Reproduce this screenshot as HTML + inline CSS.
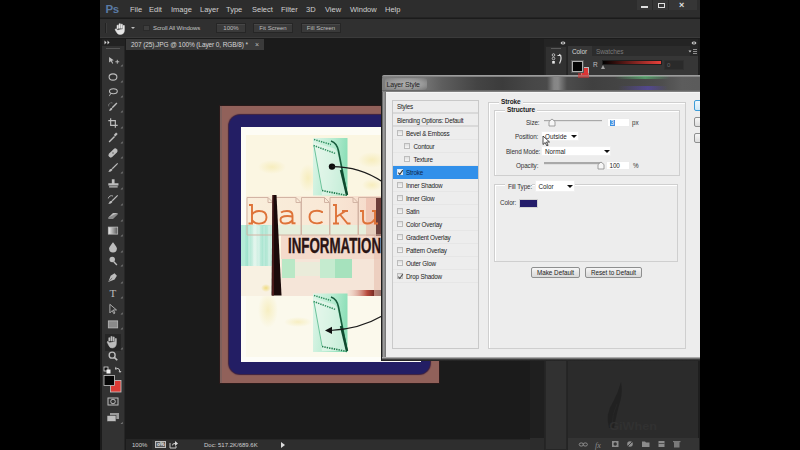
<!DOCTYPE html>
<html><head><meta charset="utf-8">
<style>
*{margin:0;padding:0;box-sizing:border-box}
html,body{width:800px;height:450px;overflow:hidden;background:#000}
body{position:relative;font-family:"Liberation Sans",sans-serif;}
.a{position:absolute}
.t{position:absolute;white-space:nowrap;line-height:1}
#ps{position:absolute;left:0;top:0;width:700px;height:450px;overflow:hidden}
.mn{position:absolute;top:6px;font-size:7.5px;color:#d0d0d0;white-space:nowrap;line-height:1}
.btn{position:absolute;top:23px;height:10px;background:#3a3a3a;border:1px solid #262626;box-shadow:inset 0 1px 0 #474747;font-size:6px;color:#bdbdbd;text-align:center;line-height:8px}
.row{position:absolute;left:393px;width:85px;height:13px;border-bottom:1px solid #e4e4e4;font-size:6.3px;color:#222;line-height:12px;white-space:nowrap;letter-spacing:-0.2px}
.cb{position:absolute;top:3px;width:6px;height:6px;border:1px solid #bcbcbc;background:linear-gradient(#dedede,#f6f6f6)}
.lbl{position:absolute;font-size:6.3px;color:#333;white-space:nowrap;line-height:1;letter-spacing:-0.1px}
.dd{position:absolute;background:#fff;border:1px solid #f0f0f0;font-size:6.3px;color:#222;line-height:9px;padding-left:3px;white-space:nowrap}
.arr{position:absolute;width:0;height:0;border-left:3px solid transparent;border-right:3px solid transparent;border-top:3px solid #111}
.dbtn{position:absolute;height:11px;border:1px solid #8e8f8f;border-radius:2px;background:linear-gradient(#f6f6f6 0%,#e6e6e6 50%,#d9d9d9 100%);font-size:6.3px;color:#222;text-align:center;line-height:9px;white-space:nowrap}
.lt{position:absolute;top:75px;font-family:"Liberation Mono",monospace;font-size:29px;color:#e2793c;line-height:1;transform:scaleX(1.2)}
</style></head><body>
<div id="ps">
  <div class="a" style="left:100px;top:0;width:600px;height:450px;background:#1b1b1b"></div>
  <!-- menu bar -->
  <div class="a" style="left:100px;top:0;width:600px;height:18px;background:#2d2d2d;border-bottom:1px solid #232323"></div>
  <div class="t" style="left:105.5px;top:3.5px;font-size:11.5px;font-weight:bold;color:#5a7aa5;letter-spacing:-0.4px">Ps</div>
  <span class="mn" style="left:130px">File</span>
  <span class="mn" style="left:149px">Edit</span>
  <span class="mn" style="left:171px">Image</span>
  <span class="mn" style="left:200px">Layer</span>
  <span class="mn" style="left:226px">Type</span>
  <span class="mn" style="left:252px">Select</span>
  <span class="mn" style="left:281px">Filter</span>
  <span class="mn" style="left:306px">3D</span>
  <span class="mn" style="left:325px">View</span>
  <span class="mn" style="left:350px">Window</span>
  <span class="mn" style="left:385px">Help</span>
  <!-- window controls -->
  <div class="a" style="left:637px;top:0;width:16px;height:10px;background:#363636;border-right:1px solid #2a2a2a"></div>
  <div class="a" style="left:653px;top:0;width:16px;height:10px;background:#363636;border-right:1px solid #2a2a2a"></div>
  <div class="a" style="left:669px;top:0;width:28px;height:10px;background:#363636"></div>
  <div class="a" style="left:641px;top:6px;width:7px;height:2px;background:#e0e0e0"></div>
  <div class="a" style="left:658px;top:3px;width:7px;height:5px;border:1.5px solid #e0e0e0"></div>
  <div class="t" style="left:679px;top:1px;font-size:9px;font-weight:bold;color:#e0e0e0">×</div>
  <!-- options bar -->
  <div class="a" style="left:100px;top:19px;width:600px;height:19px;background:#303030;border-bottom:1px solid #3a3a3a"></div>
  <div class="a" style="left:105px;top:23px;width:2px;height:10px;background:#222;border-right:1px solid #3c3c3c"></div>
  <svg class="a" style="left:114px;top:22px" width="13" height="13" viewBox="0 0 13 13"><path d="M3 7V3.2h1.4V6.5M5 6.5V1.8h1.4v4.7M7 6.5V2.2h1.4v4.3M9 7V3.5h1.4v4.5q0 4.5-4.5 4.5q-2.3 0-3.3-2.2L1 7.5l1-0.8 1.8 1.5z" fill="#e6e6e6" stroke="#e6e6e6" stroke-width="0.5" stroke-linejoin="round"/></svg>
  <div class="arr" style="left:131px;top:27px;border-top-color:#bbb;border-left-width:2px;border-right-width:2px;border-top-width:2px"></div>
  <div class="a" style="left:143px;top:25px;width:7px;height:6px;background:#3e3e3e;border:1px solid #2a2a2a"></div>
  <div class="t" style="left:153px;top:25px;font-size:6px;color:#c4c4c4;letter-spacing:-0.1px">Scroll All Windows</div>
  <div class="btn" style="left:216px;width:30px">100%</div>
  <div class="btn" style="left:253px;width:40px">Fit Screen</div>
  <div class="btn" style="left:301px;width:40px">Fill Screen</div>
  <!-- toolbar -->
  <div class="a" style="left:102px;top:39px;width:23px;height:411px;background:#323232;border-right:1px solid #262626"></div>
  <div class="a" style="left:102px;top:39px;width:23px;height:7px;background:#222"></div>
  <svg class="a" style="left:104px;top:40px" width="6" height="5" viewBox="0 0 6 5"><path d="M0.5 0.5l2 2-2 2zM3.5 0.5l2 2-2 2z" fill="#dadada"/></svg>
  <div class="a" style="left:106px;top:48px;width:14px;height:1px;background:#555"></div>
  <!-- TOOLBAR_ICONS -->
<svg class="a" style="left:0;top:0" width="130" height="450" viewBox="0 0 130 450"><defs><linearGradient id="g1" x1="0" x2="1"><stop offset="0" stop-color="#eee"/><stop offset="1" stop-color="#555"/></linearGradient></defs><g transform="translate(113 61) scale(0.78) translate(-113 -61)"><path d="M108 56l6 4-2.5 0.6 1.8 3.4-1.2 0.6-1.8-3.4-2.3 1.8z" fill="#bdbdbd"/><path d="M116 62h5M118.5 59.5v5" stroke="#bdbdbd" stroke-width="1.2"/></g><g transform="translate(113 77) scale(0.78) translate(-113 -77)"><ellipse cx="113" cy="77" rx="5" ry="4" fill="none" stroke="#bdbdbd" stroke-width="1.4"/></g><g transform="translate(113 92) scale(0.78) translate(-113 -92)"><ellipse cx="113.5" cy="91" rx="5" ry="3.2" fill="none" stroke="#bdbdbd" stroke-width="1.4"/><path d="M110 94q-1 3 -2 3" stroke="#bdbdbd" fill="none" stroke-width="1.2"/></g><g transform="translate(113 107) scale(0.78) translate(-113 -107)"><path d="M118 102l-6 6" stroke="#bdbdbd" stroke-width="1.8"/><path d="M112 108q-3 0-4 4q3 0 4-2z" fill="#bdbdbd"/><path d="M107.5 106a3.5 3.5 0 0 1 5 -4" stroke="#bdbdbd" fill="none" stroke-width="0.9" stroke-dasharray="1 0.8"/></g><g transform="translate(113 123) scale(0.78) translate(-113 -123)"><path d="M110 117v9h9M107 120h9v9" stroke="#bdbdbd" stroke-width="1.5" fill="none"/></g><g transform="translate(113 138) scale(0.78) translate(-113 -138)"><path d="M108 143l7-7" stroke="#bdbdbd" stroke-width="1.8"/><path d="M114 134l3-3 2 2-3 3z" fill="#bdbdbd"/></g><g transform="translate(113 153) scale(0.78) translate(-113 -153)"><rect x="106" y="150" width="14" height="6" rx="3" fill="#bdbdbd" transform="rotate(-45 113 153)"/><circle cx="113" cy="153" r="1" fill="#555"/></g><g transform="translate(113 168) scale(0.78) translate(-113 -168)"><path d="M119 162l-7 7" stroke="#bdbdbd" stroke-width="1.5"/><path d="M112 169q-3 -1 -5 4q4 0 5-2z" fill="#bdbdbd"/></g><g transform="translate(113 184) scale(0.78) translate(-113 -184)"><path d="M111.5 178h3.5v5h-3.5z M107 183h13v3h-13z M108 187h11v1.5h-11z" fill="#bdbdbd"/></g><g transform="translate(113 200) scale(0.78) translate(-113 -200)"><path d="M119 194l-7 7" stroke="#bdbdbd" stroke-width="1.5"/><path d="M112 201q-3 -1 -5 4q4 0 5-2z" fill="#bdbdbd"/><path d="M107 198a4 4 0 0 1 6-3" stroke="#bdbdbd" fill="none" stroke-width="1.1"/></g><g transform="translate(113 216) scale(0.78) translate(-113 -216)"><path d="M107 218l6-6h6l-6 6z" fill="#bdbdbd"/><path d="M107 218v2h6l6-6v-2" fill="#8a8a8a"/></g><g transform="translate(113 231) scale(0.78) translate(-113 -231)"><rect x="107" y="226" width="12" height="9" fill="url(#g1)" stroke="#bdbdbd" stroke-width="1"/></g><g transform="translate(113 247) scale(0.78) translate(-113 -247)"><path d="M113 241q-5 6-5 8a5 5 0 0 0 10 0q0-2-5-8z" fill="#bdbdbd"/></g><g transform="translate(113 261) scale(0.78) translate(-113 -261)"><circle cx="112" cy="259" r="3.5" fill="#bdbdbd"/><path d="M114 262l4 4" stroke="#bdbdbd" stroke-width="1.8"/></g><g transform="translate(113 278) scale(0.78) translate(-113 -278)"><path d="M107 283l3-8 5-3 3 3-3 5z" fill="#bdbdbd"/><path d="M108 282l4-4" stroke="#333" stroke-width="0.8"/></g><g transform="translate(113 293) scale(0.85) translate(-113 -293)"><text x="113" y="297.5" font-family="Liberation Serif" font-size="13" text-anchor="middle" fill="#bdbdbd">T</text></g><g transform="translate(113 309) scale(0.78) translate(-113 -309)"><path d="M109 303v11l3-3 2 4 1.5-0.8-2-4h4z" fill="none" stroke="#bdbdbd" stroke-width="1.1"/></g><g transform="translate(113 324) scale(0.78) translate(-113 -324)"><rect x="107" y="320" width="12" height="9" fill="#8a8a8a" stroke="#bdbdbd" stroke-width="1"/></g><path d="M120.5 66.5h2.2v-2.2z" fill="#7a7a7a"/><path d="M120.5 82.5h2.2v-2.2z" fill="#7a7a7a"/><path d="M120.5 97.5h2.2v-2.2z" fill="#7a7a7a"/><path d="M120.5 112.5h2.2v-2.2z" fill="#7a7a7a"/><path d="M120.5 128.5h2.2v-2.2z" fill="#7a7a7a"/><path d="M120.5 143.5h2.2v-2.2z" fill="#7a7a7a"/><path d="M120.5 158.5h2.2v-2.2z" fill="#7a7a7a"/><path d="M120.5 173.5h2.2v-2.2z" fill="#7a7a7a"/><path d="M120.5 189.5h2.2v-2.2z" fill="#7a7a7a"/><path d="M120.5 205.5h2.2v-2.2z" fill="#7a7a7a"/><path d="M120.5 221.5h2.2v-2.2z" fill="#7a7a7a"/><path d="M120.5 236.5h2.2v-2.2z" fill="#7a7a7a"/><path d="M120.5 252.5h2.2v-2.2z" fill="#7a7a7a"/><path d="M120.5 266.5h2.2v-2.2z" fill="#7a7a7a"/><path d="M120.5 283.5h2.2v-2.2z" fill="#7a7a7a"/><path d="M120.5 298.5h2.2v-2.2z" fill="#7a7a7a"/><path d="M120.5 314.5h2.2v-2.2z" fill="#7a7a7a"/><path d="M120.5 329.5h2.2v-2.2z" fill="#7a7a7a"/><rect x="105" y="334" width="16" height="17" fill="#262626"/><g transform="translate(113 342) scale(0.85) translate(-113 -342)"><path d="M108 341v-4h1.5v4M110.5 341v-5.5h1.5v5.5M113 341v-5h1.5v5M115.5 341.5v-3.5h1.5v5q0 6-5 6q-3 0-4-3l-2-4 1-1 2 2z" fill="#bdbdbd" stroke="#bdbdbd" stroke-width="0.6"/></g><path d="M120.5 349.5h2.2v-2.2z" fill="#7a7a7a"/><g transform="translate(113 356) scale(0.85) translate(-113 -356)"><circle cx="112" cy="355" r="3.5" fill="none" stroke="#bdbdbd" stroke-width="1.6"/><path d="M114.5 357.5l3.5 3.5" stroke="#bdbdbd" stroke-width="2"/></g><rect x="104" y="367" width="4" height="4" fill="#111" stroke="#ddd" stroke-width="0.8"/><rect x="106.5" y="369.5" width="4" height="4" fill="#eee"/><path d="M116 368q4 0 4 4" stroke="#bdbdbd" fill="none" stroke-width="1"/><path d="M115 366.5v3h2z M118.5 371h3l-1.5 2z" fill="#bdbdbd"/><rect x="110.5" y="380.5" width="10.5" height="11.5" fill="#dc3b35" stroke="#c8c8c8" stroke-width="0.8"/><rect x="104" y="375.5" width="10.5" height="10" fill="#050505" stroke="#c8c8c8" stroke-width="0.8"/><rect x="108" y="398" width="10" height="7" fill="none" stroke="#bdbdbd" stroke-width="1"/><circle cx="113" cy="401.5" r="2.3" fill="none" stroke="#bdbdbd" stroke-width="1"/><rect x="110" y="413" width="9" height="6" fill="#9a9a9a"/><rect x="107" y="415.5" width="9" height="6" fill="#bdbdbd" stroke="#333" stroke-width="0.6"/><path d="M120.5 424h2.2v-2.2z" fill="#7a7a7a"/></svg>
  <!-- /TOOLBAR_ICONS -->
  <!-- doc tab -->
  <div class="a" style="left:126px;top:39px;width:138px;height:11px;background:#3a3a3a"></div>
  <div class="t" style="left:131px;top:42px;font-size:6.5px;color:#d6d6d6;letter-spacing:-0.1px">207 (25).JPG @ 100% (Layer 0, RGB/8) *</div>
  <div class="t" style="left:255px;top:41px;font-size:7px;color:#bbb">×</div>
  <!-- status bar -->
  <div class="a" style="left:126px;top:439px;width:404px;height:11px;background:#2e2e2e;border-top:1px solid #262626"></div>
  <div class="a" style="left:126px;top:440px;width:26px;height:10px;background:#262626"></div>
  <div class="t" style="left:132px;top:441.5px;font-size:6px;color:#d0d0d0">100%</div>
  <div class="a" style="left:155px;top:441px;width:11px;height:7px;background:#5a5a5a;border:1px solid #bdbdbd"></div>
  <div class="t" style="left:157px;top:441.5px;font-size:5px;color:#eee;font-weight:bold">o%</div>
  <svg class="a" style="left:169px;top:440px" width="9" height="9" viewBox="0 0 9 9"><path d="M1 3v5h6v-2" stroke="#c8c8c8" stroke-width="1" fill="none"/><path d="M3 6q0-3 3-3v-2l3 2.5-3 2.5v-2q-2 0-3 2z" fill="#d8d8d8"/></svg>
  <div class="t" style="left:204px;top:441.5px;font-size:6px;color:#cfcfcf">Doc: 517.2K/689.6K</div>
  <div class="arr" style="left:281px;top:441.5px;border-top:3px solid transparent;border-bottom:3px solid transparent;border-left:4px solid #ddd;border-right:0"></div>
  <!-- scrollbar column -->
  <div class="a" style="left:530px;top:39px;width:14px;height:411px;background:#1f1f1f"></div>
  <div class="a" style="left:530px;top:438px;width:14px;height:12px;background:#2c2c2c"></div>
  <!-- right panels -->
  <div class="a" style="left:544px;top:39px;width:156px;height:411px;background:#242424"></div>
  <div class="a" style="left:545px;top:46px;width:22px;height:404px;background:#313131;border:1px solid #262626"></div>
  <div class="a" style="left:551px;top:48px;width:10px;height:1px;background:#5a5a5a"></div>
  <svg class="a" style="left:560px;top:40.5px" width="6" height="4" viewBox="0 0 6 4"><path d="M2.5 0l-2 2 2 2zM3.5 0l2 2-2 2z" fill="#d8d8d8"/></svg>
  <svg class="a" style="left:690.5px;top:40.5px" width="6" height="4" viewBox="0 0 6 4"><path d="M2.5 0l-2 2 2 2zM3.5 0l2 2-2 2z" fill="#d8d8d8"/></svg>
  <svg class="a" style="left:551px;top:53px" width="12" height="13" viewBox="0 0 12 13"><circle cx="2.5" cy="2" r="1.3" fill="none" stroke="#cfcfcf" stroke-width="0.8"/><circle cx="2.5" cy="5.5" r="1.3" fill="none" stroke="#cfcfcf" stroke-width="0.8"/><rect x="1.2" y="8" width="2.6" height="2.6" fill="#e8e8e8"/><path d="M6.5 2.5h3l-1.2-1.5M9.5 2.5q1.5 3-1 8" stroke="#dcdcdc" stroke-width="1.2" fill="none"/></svg>
  <div class="a" style="left:568px;top:46px;width:131px;height:404px;background:#2b2b2b"></div>
  <!-- color panel -->
  <div class="a" style="left:568px;top:46px;width:131px;height:10px;background:#262626"></div>
  <div class="a" style="left:568px;top:46px;width:24px;height:10px;background:#363636"></div>
  <div class="a" style="left:592px;top:46px;width:98px;height:10px;background:#2c2c2c"></div>
  <div class="t" style="left:572px;top:48.5px;font-size:6.5px;color:#d4d4d4;letter-spacing:-0.1px">Color</div>
  <div class="t" style="left:596px;top:48.5px;font-size:6.5px;color:#7a7a7a;letter-spacing:-0.1px">Swatches</div>
  <svg class="a" style="left:688px;top:48px" width="10" height="7" viewBox="0 0 10 7"><path d="M0.5 2.5h3l-1.5 2z" fill="#c8c8c8"/><path d="M5 1.5h4M5 3.5h4M5 5.5h4" stroke="#9a9a9a" stroke-width="0.9"/></svg>
  <div class="a" style="left:568px;top:56px;width:131px;height:24px;background:#363636"></div>
  <div class="a" style="left:581px;top:66.5px;width:8px;height:10px;background:#dd3535;border:1px solid #bbb"></div>
  <div class="a" style="left:572px;top:61px;width:11px;height:11px;background:#050505;border:1px solid #b0b0b0;box-shadow:0 0 0 1px #555"></div>
  <div class="t" style="left:593px;top:62px;font-size:6.5px;color:#bfbfbf">R</div>
  <div class="a" style="left:602px;top:59.5px;width:60px;height:5px;background:linear-gradient(90deg,#000,#e8403a);border:1px solid #1e1e1e"></div>
  <div class="arr" style="left:600.5px;top:65px;border-top:0;border-bottom:4px solid #a0a0a0;border-left-width:2.5px;border-right-width:2.5px"></div>
  <div class="a" style="left:664px;top:60px;width:20px;height:10px;background:#2a2a2a;border:1px solid #303030"></div>
  <div class="t" style="left:667px;top:62px;font-size:6px;color:#666">0</div>
  <div class="a" style="left:698px;top:39px;width:2px;height:411px;background:#1e1e1e"></div>
  <svg class="a" style="left:600px;top:378px" width="90" height="56" viewBox="0 0 90 56">
    <path d="M9 50q-4-14 4-26q5-9 8-20q2 10 -1 20q-3 10 -6 26z" fill="#1f1f1f" opacity="0.8"/>
    <path d="M12 48q0-12 5-22" stroke="#262626" stroke-width="1" fill="none"/>
    <text x="8" y="52" font-family="Liberation Sans" font-weight="bold" font-size="11" fill="#333" opacity="0.8" transform="scale(1.15 1)">GiWhen</text>
  </svg>
  <!-- layers panel bottom -->
  <div class="a" style="left:568px;top:438px;width:131px;height:12px;background:#343434"></div>
  <svg class="a" style="left:568px;top:438px" width="131" height="12" viewBox="0 0 131 12">
    <g fill="none" stroke="#8c8c8c" stroke-width="1">
      <ellipse cx="13.3" cy="6.5" rx="2.1" ry="1.6"/><ellipse cx="17.3" cy="6.5" rx="2.1" ry="1.6"/>
    </g>
    <text x="27" y="9.5" font-family="Liberation Serif" font-style="italic" font-size="8" fill="#8c8c8c">fx</text>
    <rect x="44" y="3" width="6.5" height="6" fill="#8c8c8c"/><circle cx="47.2" cy="6" r="1.7" fill="#343434"/>
    <circle cx="62" cy="6" r="2.8" fill="#8c8c8c"/><path d="M60 8l4-4" stroke="#343434" stroke-width="0.9"/>
    <path d="M74 3.5h3l1 1h3.5v4.5h-7.5z" fill="#8c8c8c"/>
    <rect x="90.5" y="3" width="6" height="6" fill="#8c8c8c"/><path d="M90.5 5.5h6" stroke="#343434" stroke-width="0.7"/>
    <rect x="106" y="4" width="5.5" height="5.5" fill="#7a7a7a"/><rect x="105" y="3" width="7.5" height="1.2" fill="#7a7a7a"/>
  </svg>

  <!-- IMAGE -->
  <div class="a" style="left:219px;top:105px;width:221px;height:279px;background:#2a1a1a"></div>
  <div class="a" style="left:220px;top:106px;width:219px;height:277px;background:#91615a;box-shadow:inset 2px 0 0 #7e605c"></div>
  <div class="a" style="left:229px;top:115px;width:201px;height:259px;background:#231e64;border-radius:11px;box-shadow:0 0 1px 1px #3a2040"></div>
  <svg class="a" style="left:241px;top:127px" width="180" height="235" viewBox="241 127 180 235">
    <defs>
      <radialGradient id="yb"><stop offset="0" stop-color="#f3e6a0"/><stop offset="1" stop-color="#f3e6a0" stop-opacity="0"/></radialGradient>
      <radialGradient id="yb2"><stop offset="0" stop-color="#f0dc80"/><stop offset="1" stop-color="#f0dc80" stop-opacity="0"/></radialGradient>
      <linearGradient id="fl" x1="0" x2="1" y1="0" y2="0.2"><stop offset="0" stop-color="#dff5e8"/><stop offset="0.55" stop-color="#b9ecd2"/><stop offset="1" stop-color="#8ddfb8"/></linearGradient>
      <linearGradient id="teal" x1="0" x2="1"><stop offset="0" stop-color="#c8ede2"/><stop offset="0.2" stop-color="#9fe2cc"/><stop offset="0.45" stop-color="#e2f5ec"/><stop offset="0.7" stop-color="#a6e4cf"/><stop offset="1" stop-color="#d2efe2"/></linearGradient>
      <linearGradient id="band" x1="0" x2="1"><stop offset="0" stop-color="#f9eedb"/><stop offset="0.6" stop-color="#f9e8d6"/><stop offset="1" stop-color="#f5d8c8"/></linearGradient>
      <linearGradient id="red" x1="0" x2="1"><stop offset="0" stop-color="#f0d6c8" stop-opacity="0"/><stop offset="0.6" stop-color="#b84a3c"/><stop offset="1" stop-color="#2a0808"/></linearGradient>
    </defs>
    <rect x="241" y="127" width="180" height="235" fill="#fdfcf5"/>
    <rect x="246" y="135" width="175" height="225" fill="#fbf6e2"/>
    <rect x="246" y="296" width="175" height="64" fill="#fbf9ec"/>
    <ellipse cx="272" cy="167" rx="14" ry="7" fill="url(#yb)" opacity="0.55"/>
    <ellipse cx="308" cy="178" rx="9" ry="14" fill="url(#yb)" opacity="0.55"/>
    <ellipse cx="372" cy="160" rx="14" ry="8" fill="url(#yb)" opacity="0.55"/>
    <ellipse cx="372" cy="185" rx="10" ry="6" fill="url(#yb)" opacity="0.55"/>
    <ellipse cx="268" cy="310" rx="10" ry="18" fill="url(#yb)" opacity="0.55"/>
    <ellipse cx="298" cy="322" rx="14" ry="5" fill="url(#yb)" opacity="0.55"/>
    <ellipse cx="265" cy="288" rx="6" ry="5" fill="url(#yb2)"/>
    <ellipse cx="306" cy="286" rx="6" ry="5" fill="url(#yb2)"/>
    <rect x="241" y="357" width="180" height="5" fill="#fdfdf8"/>
    <!-- upper floppy -->
    <rect x="313" y="138" width="34.5" height="57.5" fill="url(#fl)"/>
    <path d="M314 143l19 5q4 1 5 7l9 40h-25z" fill="#eef9f0" opacity="0.6"/>
    <path d="M314 139.5l17 5M313.5 145.5l22 8" stroke="#2f8f5f" stroke-width="1.5" stroke-dasharray="1.4 1"/>
    <path d="M331 141q6 2 7.5 10l8.5 44" stroke="#175c3c" stroke-width="1.6" fill="none"/>
    <path d="M341 170l6 25" stroke="#0f4a2e" stroke-width="2.4" fill="none"/>
    <path d="M314 146l8 44" stroke="#6cc39a" stroke-width="1" fill="none"/>
    <path d="M322 190.5l25 5" stroke="#1f7a4c" stroke-width="1.6" stroke-dasharray="1.4 1" fill="none"/>
    <!-- letter band -->
    <rect x="246" y="196" width="136" height="40" fill="url(#band)"/>
    <rect x="241" y="225" width="32" height="41" fill="url(#teal)"/>
    <rect x="241" y="225" width="4" height="41" fill="#b5ecd8"/>
    <path d="M249 226v40M254 226v40M259 226v40M264 226v40M269 226v40" stroke="#ffffff" stroke-width="1.2" opacity="0.35"/>
    <rect x="273" y="225" width="109" height="10" fill="#e6efdc"/>
    <rect x="281" y="235" width="101" height="24" fill="#f4dacb"/>
    <rect x="241" y="266" width="32" height="30" fill="#f8f1e2"/>
    <rect x="281" y="259" width="100" height="37" fill="#f5e5d8"/>
    <rect x="282" y="259" width="13" height="19" fill="#b9e8c6"/>
    <rect x="295" y="262" width="25" height="14" fill="#e6efdc" opacity="0.7"/>
    <rect x="320" y="259" width="15" height="19" fill="#c5ebcf"/>
    <rect x="335" y="259" width="17" height="19" fill="#a6e2bd"/>
    <ellipse cx="266" cy="288" rx="5" ry="4" fill="url(#yb2)"/>
    <rect x="345" y="290" width="37" height="6" fill="url(#red)"/>
    <rect x="376" y="197" width="6" height="39" fill="#4a1414" opacity="0.8"/>
    <rect x="366" y="197" width="10" height="39" fill="#e8b0a0" opacity="0.5"/>
    <rect x="374" y="236" width="8" height="60" fill="#e8c0b0" opacity="0.6"/>
    <g fill="none" stroke="#d2b4a4" stroke-width="1">
      <path d="M247 197.5h21l5 5v32.5h-26z M273 197.5h23l5 5v32.5h-28z M301.5 197.5h23l5 5v32.5h-28z M330 197.5h23l5 5v32.5h-28z M358.5 197.5h23l5 5v32.5h-28z"/>
      <path d="M268 197.5v5h5M296 197.5v5h5M324.5 197.5v5h5M353 197.5v5h5M381.5 197.5v5h5"/>
    </g>
    <g fill="none" stroke="#de7339" stroke-width="1.9" stroke-linecap="butt">
      <!-- b -->
      <path d="M249 205h3v18.5h-3.5"/>
      <path d="M252 214.5q2.5-3.5 7-3.5q7.5 0 7.5 6.3q0 6.3-7.5 6.3q-4.5 0-7-3.5"/>
      <!-- a -->
      <path d="M281 212.5q2-1.5 6-1.5q5.5 0 5.5 4.5v7.8h3"/>
      <path d="M292.5 216.5q-2-0.5-5-0.5q-7 0-7 3.7q0 3.8 5 3.8q4 0 7-3"/>
      <!-- c -->
      <path d="M322 213v-1.2q-2.5-1-5-1q-7.5 0-7.5 6.3q0 6.3 7.5 6.3q3 0 5.5-1.5"/>
      <!-- k -->
      <path d="M333 205h3v18.5M333 223.5h6M336 217l9.5-6M348 211h-6M340 214.5l7.5 9h3"/>
      <!-- u -->
      <path d="M360 211h3v8.5q0 4 4.5 4q4.5 0 7-4M372 211h3v12.5h3"/>
    </g>
    <!-- black bar -->
    <path d="M272.5 195h4l5 100.5h-10z" fill="#1a0a0a"/>
    <path d="M272.5 195h1.2l0.3 100.5h-2z" fill="#4a1a1a"/>
    <!-- lower floppy -->
    <rect x="313" y="293.5" width="34.5" height="58.5" fill="url(#fl)"/>
    <path d="M314 299l19 5q4 1 5 7l9 40h-25z" fill="#eef9f0" opacity="0.6"/>
    <path d="M314 295.5l17 5M313.5 301.5l22 8" stroke="#2f8f5f" stroke-width="1.5" stroke-dasharray="1.4 1"/>
    <path d="M331 297q6 2 7.5 10l8.5 44" stroke="#175c3c" stroke-width="1.6" fill="none"/>
    <path d="M341 326l6 25" stroke="#0f4a2e" stroke-width="2.4" fill="none"/>
    <path d="M314 302l8 44" stroke="#6cc39a" stroke-width="1" fill="none"/>
    <path d="M322 346.5l25 5" stroke="#1f7a4c" stroke-width="1.6" stroke-dasharray="1.4 1" fill="none"/>
    <!-- arrows -->
    <circle cx="332" cy="166.6" r="3.2" fill="#0e0e0e"/>
    <path d="M332 166.6q28 0 50 15" stroke="#1a1a1a" stroke-width="1.2" fill="none"/>
    <path d="M382 316q-22 13 -52 14.5" stroke="#1a1a1a" stroke-width="1.2" fill="none"/>
    <path d="M325 330.5l7-3.8v7.4z" fill="#111"/>
  </svg>
  <div class="t" style="left:287.5px;top:235.5px;font-size:21.5px;font-weight:bold;color:#2a1414;transform:scaleX(0.62);transform-origin:left top;-webkit-text-stroke:0.4px #2a1414">INFORMATION</div>
  <!-- /IMAGE -->

  <!-- DIALOG -->
  <div class="a" style="left:381px;top:75px;width:330px;height:286px;background:#1e1e1e;border-radius:3px 3px 0 0"></div>
  <div class="a" style="left:382px;top:75px;width:330px;height:18px;border-radius:4px 4px 0 0;background:linear-gradient(90deg,#7e7e7e 0px,#777 40px,#5e5e5e 60px,#444 95px,#3c3c3c 120px,#474747 150px,#4a4a4a 165px,#858585 172px,#888 176px,#4c4c4c 185px,#404040 210px,#464646 250px,#4e4e4e 280px,#5c5c5c 300px,#5a5a5a 330px)"></div>
  <div class="a" style="left:385px;top:78px;width:42px;height:12px;border-radius:3px;background:radial-gradient(ellipse at center,#b0b0b0 0%,#9a9a9a 55%,rgba(150,150,150,0) 100%)"></div>
  <div class="a" style="left:382px;top:75px;width:330px;height:2px;border-radius:4px 4px 0 0;background:linear-gradient(#a8a8a8,#777)"></div>
  <div class="a" style="left:382px;top:90px;width:330px;height:2px;background:linear-gradient(#5a5a5a,#8c8c8c)"></div>
  <div class="a" style="left:615px;top:76px;width:55px;height:3px;background:linear-gradient(90deg,rgba(90,170,110,0),rgba(90,200,120,.6) 55%,rgba(90,170,110,0))"></div>
  <div class="a" style="left:618px;top:86px;width:50px;height:4px;background:linear-gradient(90deg,rgba(80,60,170,0),rgba(90,70,200,.55) 60%,rgba(80,60,170,0))"></div>
  <div class="a" style="left:578px;top:73px;width:11px;height:5px;background:rgba(220,50,50,.55)"></div>
  <div class="a" style="left:382px;top:92px;width:4px;height:266px;background:linear-gradient(90deg,#505050,#a0a0a0 40%,#707070)"></div>
  <div class="a" style="left:382px;top:357px;width:330px;height:4px;background:linear-gradient(#c8c8c8,#404040 60%,#1a1a1a)"></div>
  <div class="t" style="left:386.5px;top:80.5px;font-size:7px;color:#1e1e1e;letter-spacing:-0.15px">Layer Style</div>
  <div class="a" style="left:386px;top:92px;width:320px;height:265px;background:#ededed;border-top:1px solid #f6f6f6"></div>
  <!-- styles list -->
  <div class="a" style="left:392px;top:100px;width:87px;height:249px;border:1px solid #c9c9c9;background:#ededed"></div>
<div class="row" style="top:100px;height:14px;border-bottom:2px solid #d9d9d9;"><span class="t" style="left:4px;top:3.5px">Styles</span></div>
<div class="row" style="top:114px;height:13px;border-bottom:2px solid #d9d9d9;"><span class="t" style="left:4px;top:3.5px">Blending Options: Default</span></div>
<div class="row" style="top:127px;height:13px;border-bottom:1px solid #e6e6e6;"><div class="cb" style="left:4.0px;"></div><span class="t" style="left:13.0px;top:3.5px">Bevel &amp; Emboss</span></div>
<div class="row" style="top:140px;height:13px;border-bottom:1px solid #e6e6e6;"><div class="cb" style="left:10.7px;"></div><span class="t" style="left:20.5px;top:3.5px">Contour</span></div>
<div class="row" style="top:153px;height:13px;border-bottom:1px solid #e6e6e6;"><div class="cb" style="left:10.7px;"></div><span class="t" style="left:20.5px;top:3.5px">Texture</span></div>
<div class="row" style="top:166px;height:12.5px;background:#3190ea;border-bottom:0;"><div class="cb" style="left:4.0px;border-color:#d8e6f4;background:#eef5fb;"></div><svg class="a" style="left:4.0px;top:3px" width="7" height="7" viewBox="0 0 7 7"><path d="M1.3 3.6l1.5 1.7 3-4.2" stroke="#333" stroke-width="1.1" fill="none"/></svg><span class="t" style="left:13.0px;top:3.5px;color:#10284a">Stroke</span></div>
<div class="row" style="top:179px;height:13px;border-bottom:1px solid #e6e6e6;"><div class="cb" style="left:4.0px;"></div><span class="t" style="left:13.0px;top:3.5px">Inner Shadow</span></div>
<div class="row" style="top:192px;height:13px;border-bottom:1px solid #e6e6e6;"><div class="cb" style="left:4.0px;"></div><span class="t" style="left:13.0px;top:3.5px">Inner Glow</span></div>
<div class="row" style="top:205px;height:13px;border-bottom:1px solid #e6e6e6;"><div class="cb" style="left:4.0px;"></div><span class="t" style="left:13.0px;top:3.5px">Satin</span></div>
<div class="row" style="top:218px;height:13px;border-bottom:1px solid #e6e6e6;"><div class="cb" style="left:4.0px;"></div><span class="t" style="left:13.0px;top:3.5px">Color Overlay</span></div>
<div class="row" style="top:231px;height:13px;border-bottom:1px solid #e6e6e6;"><div class="cb" style="left:4.0px;"></div><span class="t" style="left:13.0px;top:3.5px">Gradient Overlay</span></div>
<div class="row" style="top:244px;height:13px;border-bottom:1px solid #e6e6e6;"><div class="cb" style="left:4.0px;"></div><span class="t" style="left:13.0px;top:3.5px">Pattern Overlay</span></div>
<div class="row" style="top:257px;height:13px;border-bottom:1px solid #e6e6e6;"><div class="cb" style="left:4.0px;"></div><span class="t" style="left:13.0px;top:3.5px">Outer Glow</span></div>
<div class="row" style="top:270px;height:13px;border-bottom:1px solid #e6e6e6;"><div class="cb" style="left:4.0px;"></div><svg class="a" style="left:4.0px;top:3px" width="7" height="7" viewBox="0 0 7 7"><path d="M1.3 3.6l1.5 1.7 3-4.2" stroke="#555" stroke-width="1.1" fill="none"/></svg><span class="t" style="left:13.0px;top:3.5px">Drop Shadow</span></div>

  <!-- right pane -->
  <div class="a" style="left:488px;top:102px;width:198px;height:247px;border:1px solid #cfcfcf;box-shadow:inset 1px 1px 0 #fff"></div>
  <div class="a" style="left:494px;top:110px;width:186px;height:66px;border:1px solid #cfcfcf;box-shadow:inset 1px 1px 0 #fff"></div>
  <div class="a" style="left:494px;top:184px;width:184px;height:78px;border:1px solid #cfcfcf;box-shadow:inset 1px 1px 0 #fff"></div>
  <div class="t" style="left:499px;top:98.5px;font-size:6.5px;font-weight:bold;color:#222;background:#ededed;padding:0 2px;letter-spacing:-0.1px">Stroke</div>
  <div class="t" style="left:505px;top:106.5px;font-size:6.5px;font-weight:bold;color:#222;background:#ededed;padding:0 2px;letter-spacing:-0.1px">Structure</div>
  <div class="lbl" style="left:526px;top:119.5px">Size:</div>
  <div class="a" style="left:544px;top:119.5px;width:58px;height:2.5px;background:#a9a9a9;border-bottom:1px solid #e0e0e0"></div>
  <svg class="a" style="left:548px;top:118px" width="8" height="9" viewBox="0 0 8 9"><path d="M1 3.5l3-2.5 3 2.5v4.5h-6z" fill="#f6f6f6" stroke="#8a8a8a" stroke-width="0.8"/></svg>
  <div class="a" style="left:607px;top:118px;width:23px;height:9px;background:#fff;border:1px solid #ececec"></div>
  <div class="a" style="left:610px;top:119.5px;width:5px;height:6.5px;background:#3f8fe0"></div>
  <div class="t" style="left:610.5px;top:119.5px;font-size:6.3px;color:#fff">3</div>
  <div class="lbl" style="left:632px;top:120px">px</div>
  <div class="lbl" style="left:515px;top:133.5px">Position:</div>
  <div class="dd" style="left:541px;top:130.5px;width:38px;height:10px">Outside</div>
  <div class="arr" style="left:571px;top:135px"></div>
  <svg class="a" style="left:542px;top:135px" width="9" height="12" viewBox="0 0 9 12"><path d="M1 1v8.5l2.2-2 1.6 3.4 1.3-.6-1.6-3.3h3z" fill="#fff" stroke="#222" stroke-width="0.8"/></svg>
  <div class="lbl" style="left:506px;top:148.5px">Blend Mode:</div>
  <div class="dd" style="left:541px;top:146px;width:70px;height:10px">Normal</div>
  <div class="arr" style="left:604px;top:150px"></div>
  <div class="lbl" style="left:516px;top:162.5px">Opacity:</div>
  <div class="a" style="left:544px;top:162px;width:58px;height:2.5px;background:#a9a9a9;border-bottom:1px solid #e0e0e0"></div>
  <svg class="a" style="left:596.5px;top:161px" width="8" height="9" viewBox="0 0 8 9"><path d="M1 3.5l3-2.5 3 2.5v4.5h-6z" fill="#f6f6f6" stroke="#8a8a8a" stroke-width="0.8"/></svg>
  <div class="a" style="left:606px;top:161px;width:24px;height:9px;background:#fff;border:1px solid #ececec"></div>
  <div class="lbl" style="left:609.5px;top:162.5px;color:#222">100</div>
  <div class="lbl" style="left:633px;top:162.5px">%</div>
  <div class="a" style="left:505px;top:182px;width:27px;height:6px;background:#ededed"></div>
  <div class="lbl" style="left:508px;top:183.5px">Fill Type:</div>
  <div class="dd" style="left:534.5px;top:179.5px;width:40px;height:12.5px;line-height:12px">Color</div>
  <div class="arr" style="left:567px;top:185px"></div>
  <div class="lbl" style="left:500px;top:200px">Color:</div>
  <div class="a" style="left:518.5px;top:199px;width:19px;height:8.5px;background:#241d6a;border:1px solid #d4d4d4"></div>
  <div class="dbtn" style="left:531px;top:267px;width:49px">Make Default</div>
  <div class="dbtn" style="left:585px;top:267px;width:57px">Reset to Default</div>
  <div class="a" style="left:694px;top:100px;width:10px;height:11px;border:1px solid #3c9cd8;border-radius:2px;background:linear-gradient(#eef7fc,#cfe8f7)"></div>
  <div class="a" style="left:694px;top:117px;width:10px;height:10px;border:1px solid #8e8f8f;border-radius:2px;background:linear-gradient(#f6f6f6,#dcdcdc)"></div>
  <div class="a" style="left:694px;top:133px;width:10px;height:10px;border:1px solid #8e8f8f;border-radius:2px;background:linear-gradient(#f6f6f6,#dcdcdc)"></div>
  <!-- /DIALOG -->
</div>
</body></html>
